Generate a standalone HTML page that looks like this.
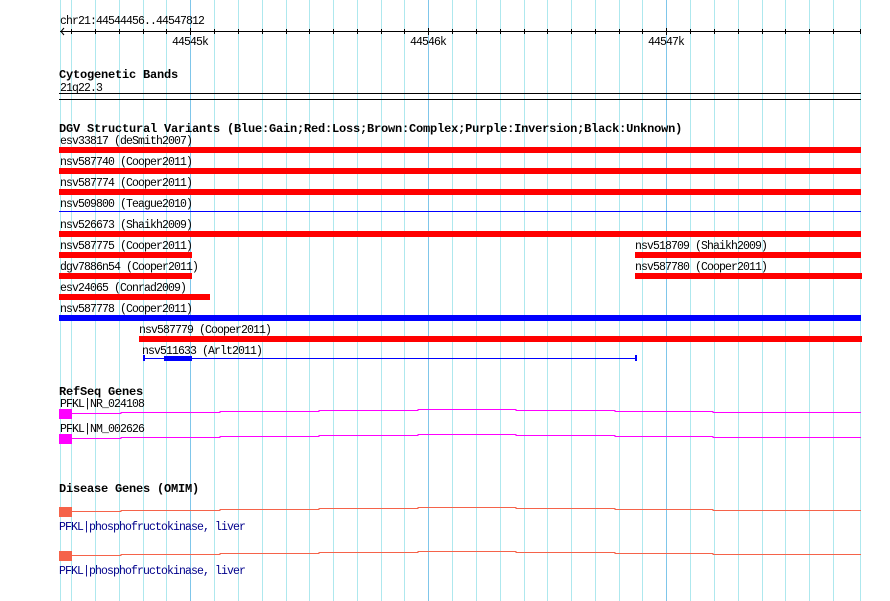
<!DOCTYPE html>
<html><head><style>
html,body{margin:0;padding:0;background:#fff;}
svg{display:block}
text{font-family:"Liberation Mono",monospace;font-size:11.5px;letter-spacing:-0.9px;fill:#000}
.b{font-weight:bold;font-size:12px;letter-spacing:-0.2px}
.bl{fill:#00008b}
</style></head><body>
<svg width="890" height="601" viewBox="0 0 890 601" xmlns="http://www.w3.org/2000/svg">
<rect width="890" height="601" fill="#fff"/>
<g stroke="#aee8ee" stroke-width="1">
<line x1="60.5" y1="0" x2="60.5" y2="601"/>
<line x1="71.5" y1="0" x2="71.5" y2="601"/><line x1="95.5" y1="0" x2="95.5" y2="601"/><line x1="119.5" y1="0" x2="119.5" y2="601"/><line x1="143.5" y1="0" x2="143.5" y2="601"/><line x1="166.5" y1="0" x2="166.5" y2="601"/>
<line x1="214.5" y1="0" x2="214.5" y2="601"/><line x1="238.5" y1="0" x2="238.5" y2="601"/><line x1="262.5" y1="0" x2="262.5" y2="601"/><line x1="286.5" y1="0" x2="286.5" y2="601"/><line x1="309.5" y1="0" x2="309.5" y2="601"/><line x1="333.5" y1="0" x2="333.5" y2="601"/><line x1="357.5" y1="0" x2="357.5" y2="601"/><line x1="381.5" y1="0" x2="381.5" y2="601"/><line x1="404.5" y1="0" x2="404.5" y2="601"/>
<line x1="452.5" y1="0" x2="452.5" y2="601"/><line x1="476.5" y1="0" x2="476.5" y2="601"/><line x1="500.5" y1="0" x2="500.5" y2="601"/><line x1="524.5" y1="0" x2="524.5" y2="601"/><line x1="547.5" y1="0" x2="547.5" y2="601"/><line x1="571.5" y1="0" x2="571.5" y2="601"/><line x1="595.5" y1="0" x2="595.5" y2="601"/><line x1="619.5" y1="0" x2="619.5" y2="601"/><line x1="642.5" y1="0" x2="642.5" y2="601"/>
<line x1="690.5" y1="0" x2="690.5" y2="601"/><line x1="714.5" y1="0" x2="714.5" y2="601"/><line x1="738.5" y1="0" x2="738.5" y2="601"/><line x1="762.5" y1="0" x2="762.5" y2="601"/><line x1="785.5" y1="0" x2="785.5" y2="601"/><line x1="809.5" y1="0" x2="809.5" y2="601"/><line x1="833.5" y1="0" x2="833.5" y2="601"/><line x1="860.5" y1="0" x2="860.5" y2="601"/>
</g>
<g stroke="#7fc6ea" stroke-width="1">
<line x1="190.5" y1="0" x2="190.5" y2="601"/><line x1="428.5" y1="0" x2="428.5" y2="601"/><line x1="666.5" y1="0" x2="666.5" y2="601"/>
</g>
<text x="60" y="24">chr21:44544456..44547812</text>
<g stroke="#000">
<line x1="60" y1="31.5" x2="861" y2="31.5"/>
<polyline points="64,28 61,31.5 64,35" fill="none"/>
</g>
<g stroke="#000">
<line x1="71.5" y1="29" x2="71.5" y2="34"/><line x1="95.5" y1="29" x2="95.5" y2="34"/><line x1="119.5" y1="29" x2="119.5" y2="34"/><line x1="143.5" y1="29" x2="143.5" y2="34"/><line x1="166.5" y1="29" x2="166.5" y2="34"/><line x1="190.5" y1="28" x2="190.5" y2="35"/>
<line x1="214.5" y1="29" x2="214.5" y2="34"/><line x1="238.5" y1="29" x2="238.5" y2="34"/><line x1="262.5" y1="29" x2="262.5" y2="34"/><line x1="286.5" y1="29" x2="286.5" y2="34"/><line x1="309.5" y1="29" x2="309.5" y2="34"/><line x1="333.5" y1="29" x2="333.5" y2="34"/><line x1="357.5" y1="29" x2="357.5" y2="34"/><line x1="381.5" y1="29" x2="381.5" y2="34"/><line x1="404.5" y1="29" x2="404.5" y2="34"/><line x1="428.5" y1="28" x2="428.5" y2="35"/>
<line x1="452.5" y1="29" x2="452.5" y2="34"/><line x1="476.5" y1="29" x2="476.5" y2="34"/><line x1="500.5" y1="29" x2="500.5" y2="34"/><line x1="524.5" y1="29" x2="524.5" y2="34"/><line x1="547.5" y1="29" x2="547.5" y2="34"/><line x1="571.5" y1="29" x2="571.5" y2="34"/><line x1="595.5" y1="29" x2="595.5" y2="34"/><line x1="619.5" y1="29" x2="619.5" y2="34"/><line x1="642.5" y1="29" x2="642.5" y2="34"/><line x1="666.5" y1="28" x2="666.5" y2="35"/>
<line x1="690.5" y1="29" x2="690.5" y2="34"/><line x1="714.5" y1="29" x2="714.5" y2="34"/><line x1="738.5" y1="29" x2="738.5" y2="34"/><line x1="762.5" y1="29" x2="762.5" y2="34"/><line x1="785.5" y1="29" x2="785.5" y2="34"/><line x1="809.5" y1="29" x2="809.5" y2="34"/><line x1="833.5" y1="29" x2="833.5" y2="34"/><line x1="860.5" y1="29" x2="860.5" y2="34"/>
</g>
<text x="172" y="45">44545k</text>
<text x="410" y="45">44546k</text>
<text x="648" y="45">44547k</text>
<text class="b" x="59" y="78">Cytogenetic Bands</text>
<text x="60" y="91">21q22.3</text>
<rect x="59" y="93" width="802" height="1" fill="#000"/>
<rect x="59" y="99" width="802" height="1" fill="#000"/>
<text class="b" x="59" y="132">DGV Structural Variants (Blue:Gain;Red:Loss;Brown:Complex;Purple:Inversion;Black:Unknown)</text>
<text x="60" y="144">esv33817 (deSmith2007)</text>
<rect x="59" y="147" width="802" height="6" fill="#f00"/>
<text x="60" y="165">nsv587740 (Cooper2011)</text>
<rect x="59" y="168" width="802" height="6" fill="#f00"/>
<text x="60" y="186">nsv587774 (Cooper2011)</text>
<rect x="59" y="189" width="802" height="6" fill="#f00"/>
<text x="60" y="207">nsv509800 (Teague2010)</text>
<rect x="59" y="211" width="802" height="1" fill="#00f"/>
<text x="60" y="228">nsv526673 (Shaikh2009)</text>
<rect x="59" y="231" width="802" height="6" fill="#f00"/>
<text x="60" y="249">nsv587775 (Cooper2011)</text>
<rect x="59" y="252" width="133" height="6" fill="#f00"/>
<text x="635" y="249">nsv518709 (Shaikh2009)</text>
<rect x="635" y="252" width="226" height="6" fill="#f00"/>
<text x="60" y="270">dgv7886n54 (Cooper2011)</text>
<rect x="59" y="273" width="133" height="6" fill="#f00"/>
<text x="635" y="270">nsv587780 (Cooper2011)</text>
<rect x="635" y="273" width="227" height="6" fill="#f00"/>
<text x="60" y="291">esv24065 (Conrad2009)</text>
<rect x="59" y="294" width="151" height="6" fill="#f00"/>
<text x="60" y="312">nsv587778 (Cooper2011)</text>
<rect x="59" y="315" width="802" height="6" fill="#00f"/>
<text x="139" y="333">nsv587779 (Cooper2011)</text>
<rect x="139" y="336" width="723" height="6" fill="#f00"/>
<text x="142" y="354">nsv511633 (Arlt2011)</text>
<rect x="143" y="358" width="494" height="1" fill="#00f"/>
<rect x="143" y="355" width="2" height="6" fill="#00f"/>
<rect x="635" y="355" width="2" height="6" fill="#00f"/>
<rect x="164" y="356" width="28" height="5" fill="#00f"/>
<text class="b" x="59" y="395">RefSeq Genes</text>
<text x="60" y="407">PFKL|NR_024108</text>
<rect x="59" y="409" width="13" height="10" fill="#f0f"/>
<polyline fill="none" stroke="#f0f" points="72,413.5 121,413.5 121,412.5 220,412.5 220,411.5 319,411.5 319,410.5 418,410.5 418,409.5 516,409.5 516,410.5 615,410.5 615,411.5 713,411.5 713,412.5 861,412.5"/>
<text x="60" y="432">PFKL|NM_002626</text>
<rect x="59" y="434" width="13" height="10" fill="#f0f"/>
<polyline fill="none" stroke="#f0f" points="72,438.5 121,438.5 121,437.5 220,437.5 220,436.5 319,436.5 319,435.5 418,435.5 418,434.5 516,434.5 516,435.5 615,435.5 615,436.5 713,436.5 713,437.5 861,437.5"/>
<text class="b" x="59" y="492">Disease Genes (OMIM)</text>
<rect x="59" y="507" width="13" height="10" fill="#f5634a"/>
<polyline fill="none" stroke="#f5634a" points="72,511.5 121,511.5 121,510.5 220,510.5 220,509.5 319,509.5 319,508.5 418,508.5 418,507.5 516,507.5 516,508.5 615,508.5 615,509.5 713,509.5 713,510.5 861,510.5"/>
<text class="bl" x="59" y="530">PFKL|phosphofructokinase, liver</text>
<rect x="59" y="551" width="13" height="10" fill="#f5634a"/>
<polyline fill="none" stroke="#f5634a" points="72,555.5 121,555.5 121,554.5 220,554.5 220,553.5 319,553.5 319,552.5 418,552.5 418,551.5 516,551.5 516,552.5 615,552.5 615,553.5 713,553.5 713,554.5 861,554.5"/>
<text class="bl" x="59" y="574">PFKL|phosphofructokinase, liver</text>
</svg>
</body></html>
